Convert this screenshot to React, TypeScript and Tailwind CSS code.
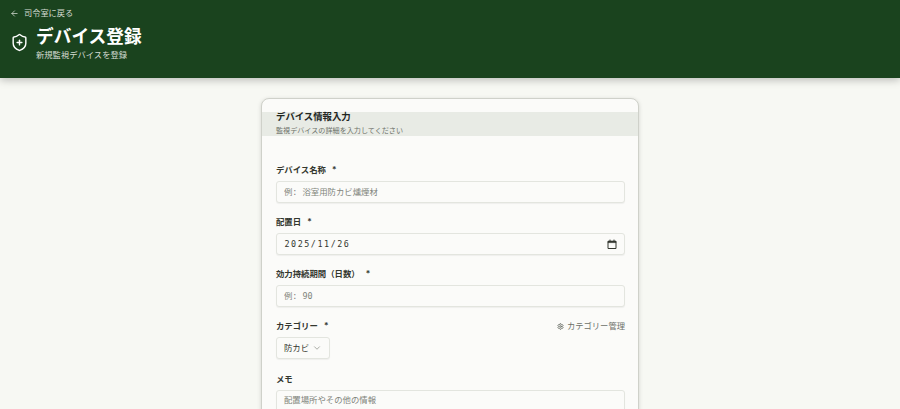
import React from "react";
import { ArrowLeft, ChevronDown, Settings, ShieldPlus } from "lucide-react";

const sans = "font-['Inter','Noto_Sans_CJK_JP',sans-serif]";
const mono = "font-['DejaVu_Sans_Mono','Noto_Sans_CJK_JP',monospace]";
const boxClass = "rounded-[3px] border border-[#e3e5df] bg-[#fbfbf9] shadow-[0_1px_1px_rgba(0,0,0,0.05)]";
const inputClass = `h-[22px] w-full px-[7px] text-[8.4px] text-[#33372f] placeholder:text-[#80847b] outline-none ${boxClass} ${mono}`;

const Label = ({ text, required }: { text: string; required?: boolean }) => (
  <label className="block text-[8.4px] leading-[13px] font-semibold text-[#33372f]">
    {text}
    {required && <span className="ml-[6px]">*</span>}
  </label>
);

export default function App() {
  return (
    <div className={`min-h-screen bg-[#f7f8f3] ${sans}`}>
      {/* Header */}
      <header className="h-[78px] bg-[#1a431e] pl-[10px] pt-[7px] text-white shadow-[0_2px_8px_rgba(0,0,0,0.25)]">
        <a className="flex h-[13px] items-center gap-[5px] text-[8.2px] text-[#d5dcd3]">
          <ArrowLeft size={9} strokeWidth={2} />
          司令室に戻る
        </a>
        <div className="mt-[4px] flex items-center gap-[7px]">
          <ShieldPlus size={19} strokeWidth={1.8} />
          <div>
            <h1 className="text-[17.7px] leading-[26px] font-bold">デバイス登録</h1>
            <p className="text-[8.3px] leading-[11px] text-[#d5dcd3]">新規監視デバイスを登録</p>
          </div>
        </div>
      </header>

      {/* Form card */}
      <main className="flex justify-center pt-[20px] pb-8">
        <section className="w-[378px] rounded-[8px] border border-[#cfd1ca] bg-[#fbfbf9] pt-[13px] shadow-[0_1px_4px_rgba(0,0,0,0.15)]">
          <div className="h-[24px] bg-[#e8ebe5] pr-[13px] pl-[14px]">
            <h2 className="text-[9.4px] leading-[10px] font-semibold text-[#22261f]">デバイス情報入力</h2>
            <p className="mt-[4px] text-[7.1px] leading-[10px] text-[#6d7169]">監視デバイスの詳細を入力してください</p>
          </div>

          <form className="flex flex-col gap-[13px] pt-[28px] pr-[13px] pb-[14px] pl-[14px]">
            <div className="flex flex-col gap-[4px]">
              <Label text="デバイス名称" required />
              <input className={inputClass} placeholder="例: 浴室用防カビ燻煙材" />
            </div>
            <div className="flex flex-col gap-[4px]">
              <Label text="配置日" required />
              <div className={`flex h-[22px] items-center justify-between pr-[7px] pl-[7.5px] text-[8.4px] tracking-[1.55px] text-[#33372f] ${boxClass} ${mono}`}>
                <span className="pt-px">2025/11/26</span>
                <svg width="10" height="10" viewBox="0 0 10 10" fill="none" stroke="#33372f">
                  <path d="M1 2.5h8v7H1z" strokeWidth="1" />
                  <path d="M1 2h8v1.6H1z" fill="#33372f" strokeWidth="0.6" />
                  <path d="M3 0.6v1.6M7 0.6v1.6" strokeWidth="1" />
                </svg>
              </div>
            </div>
            <div className="flex flex-col gap-[4px]">
              <Label text="効力持続期間（日数）" required />
              <input className={inputClass} placeholder="例: 90" />
            </div>
            <div className="flex flex-col gap-[4px]">
              <div className="flex items-center justify-between">
                <Label text="カテゴリー" required />
                <button type="button" className="flex items-center gap-[3px] text-[8.3px] leading-[13px] text-[#6d7169]">
                  <Settings size={7} strokeWidth={3} />
                  カテゴリー管理
                </button>
              </div>
              <button
                type="button"
                className={`flex h-[22px] w-[54px] items-center justify-between px-[7px] text-[8.4px] text-[#33372f] ${boxClass}`}
              >
                防カビ
                <ChevronDown size={10} className="text-[#9a9e95]" />
              </button>
            </div>
            <div className="mt-px flex flex-col gap-[4px]">
              <Label text="メモ" />
              <textarea className={`${inputClass} h-[60px] py-[3px]`} placeholder="配置場所やその他の情報" />
            </div>
          </form>
        </section>
      </main>
    </div>
  );
}
